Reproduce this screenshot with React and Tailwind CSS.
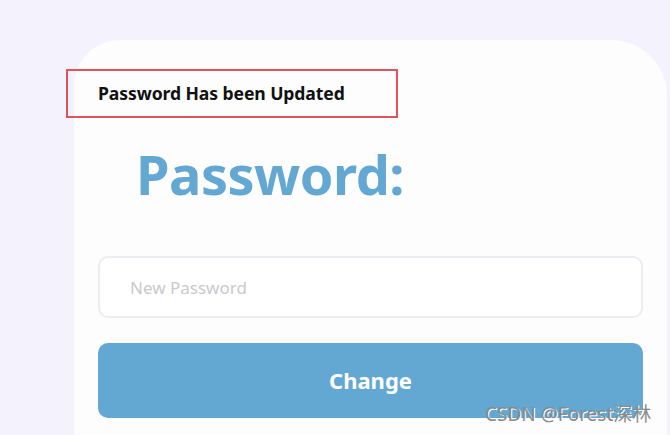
export default function App() {
  return (
    <div
      className="relative w-[670px] h-[435px] overflow-hidden bg-[#f4f3fd] pt-[40px] pl-[74px] pr-[3px]"
      style={{ fontFamily: '"Noto Sans", "Open Sans", sans-serif' }}
    >
      <div className="h-[420px] bg-[#fdfdfe] rounded-tl-[46px] rounded-tr-[56px] pt-[29px] pr-[24px]">
        {/* flash message */}
        <div className="-ml-[8px] w-[332px] h-[49px] border-2 border-[#e0535c] flex items-center pl-[30px]">
          <span className="text-[17.6px] font-bold text-[#111] tracking-[-0.1px]">Password Has been Updated</span>
        </div>

        <h1 className="ml-[62px] mt-[20px] text-[54px] leading-[72px] font-bold text-[#62a8d3] tracking-[-0.5px]">
          Password:
        </h1>

        <div className="ml-[24px] mt-[46px] flex flex-col gap-[25px]">
          <input
            type="password"
            placeholder="New Password"
            className="h-[62px] w-full rounded-[10px] border-2 border-[#ececf2] bg-white pl-[30px] text-[17px] text-[#333] placeholder:text-[#c9c9cc] outline-none"
          />
          <button className="h-[75px] w-full rounded-[10px] bg-[#62a8d3] text-white text-[22px] font-bold">
            Change
          </button>
        </div>
      </div>

      {/* watermark */}
      <div className="absolute left-[485px] top-[400px] text-[19px] text-[#8a8a8a] [text-shadow:1px_1px_0_#fff]"
        style={{ fontFamily: '"Noto Sans", "Noto Sans CJK SC", sans-serif' }}>
        CSDN @Forest深林
      </div>
    </div>
  )
}
